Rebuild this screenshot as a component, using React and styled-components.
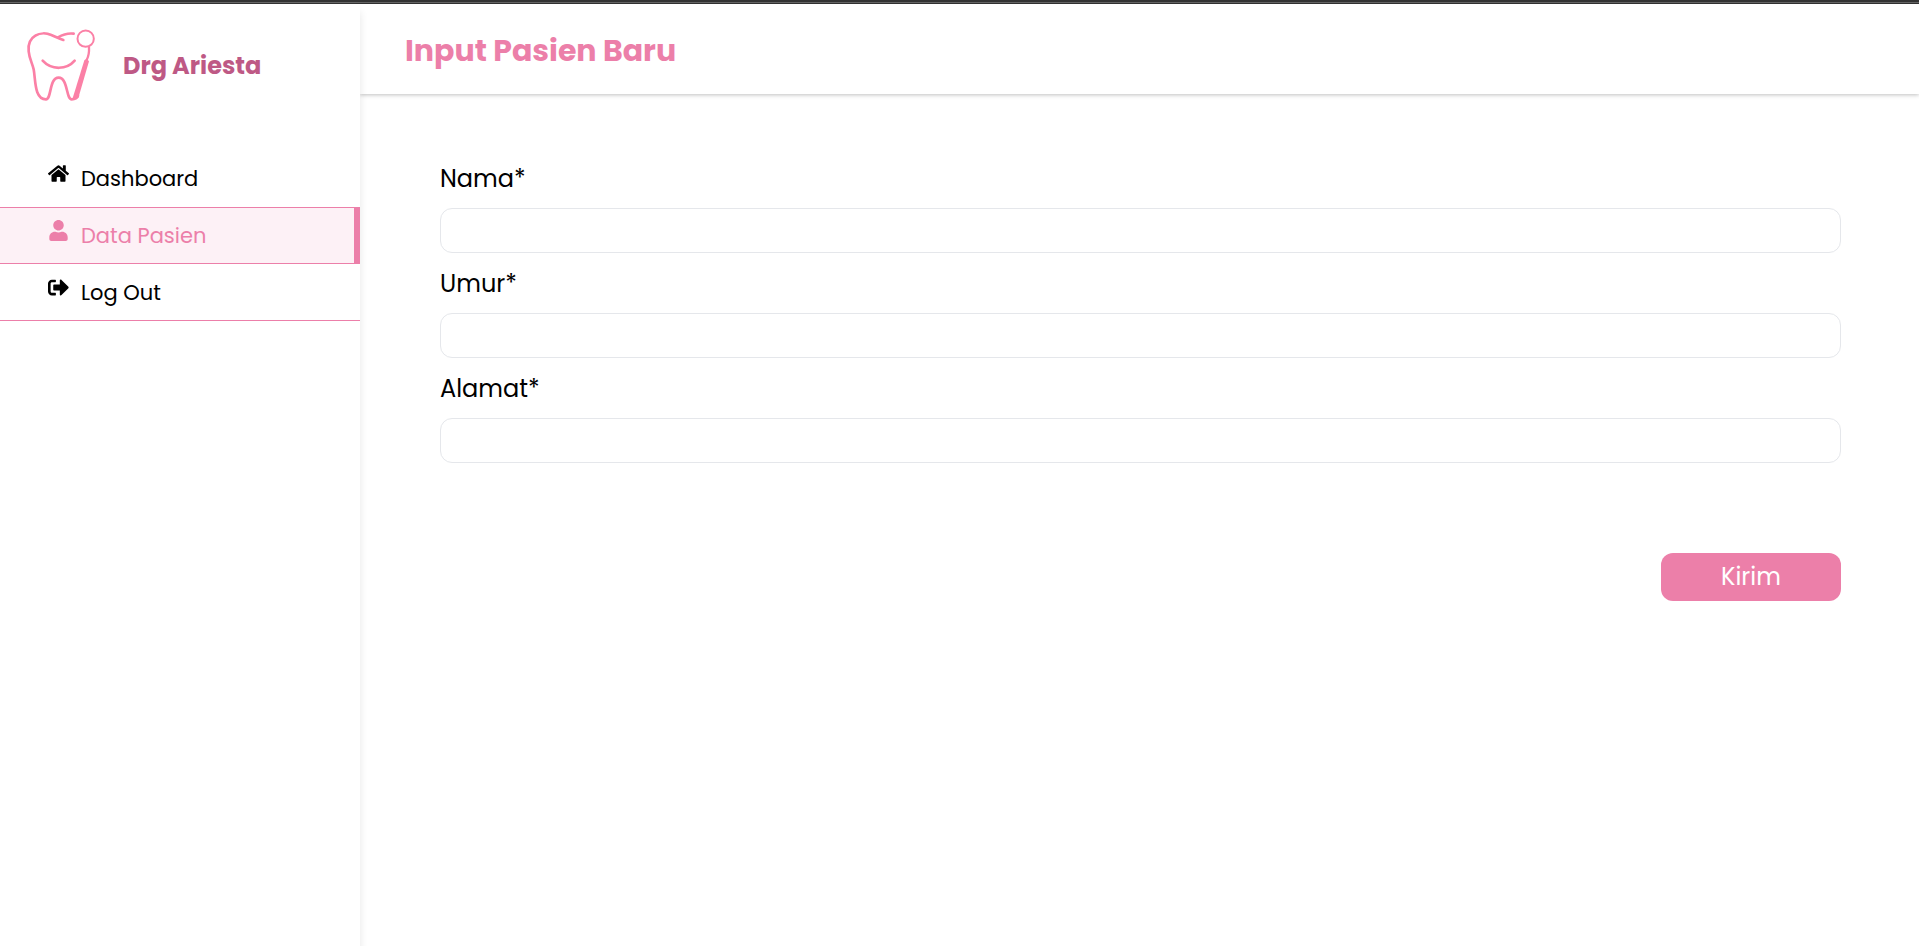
import React from "react";
import styled, { createGlobalStyle } from "styled-components";
import { FaHome, FaUser, FaSignOutAlt } from "react-icons/fa";

const pink = "#ec7fa9";
const plum = "#be5985";

const GlobalStyle = createGlobalStyle`
  *, *::before, *::after { box-sizing: border-box; }
  body {
    margin: 0;
    background: #fff;
    color: #000;
    font-family: Poppins, Inter, "Open Sans", sans-serif;
  }
`;

const Page = styled.div`
  display: flex;
  flex-direction: column;
  min-height: 100vh;
`;

const TopStrip = styled.div`
  height: 4px;
  flex: none;
  background: #333;
  border-bottom: 1px solid #333;
  box-shadow: inset 0 -1px #666;
`;

const Layout = styled.div`
  display: flex;
  flex: 1;
`;

const Sidebar = styled.aside`
  position: relative;
  z-index: 1;
  flex: none;
  width: 360px;
  background: #fff;
  box-shadow: 0 8px 8px rgba(0, 0, 0, 0.1);
`;

const Brand = styled.div`
  display: flex;
  align-items: center;
  gap: 13px;
  padding: 17px 20px 39px;
`;

const BrandName = styled.span`
  font-size: 24px;
  line-height: 36px;
  font-weight: 700;
  color: ${plum};
`;

const Menu = styled.ul`
  margin: 0;
  padding: 0;
  list-style: none;
`;

const MenuLink = styled.a`
  display: flex;
  gap: 12px;
  height: 57px;
  padding: 12px 0 0 48px;
  font-size: 21px;
  line-height: 32px;
  text-decoration: none;
  color: ${(p) => (p.$active ? pink : "#000")};
  background: ${(p) => (p.$active ? "#fdf1f6" : "transparent")};
  border-top: 1px solid ${(p) => (p.$active ? pink : "transparent")};
  border-bottom: ${(p) => (p.$active || p.$last ? `1px solid ${pink}` : "0")};
  box-shadow: ${(p) => (p.$active ? `inset -6px 0 ${pink}` : "none")};

  svg {
    flex: none;
    width: 21px;
    height: 21px;
  }
`;

const Content = styled.div`
  flex: 1;
  min-width: 0;
`;

const Header = styled.header`
  height: 90px;
  padding: 24px 45px;
  background: #fff;
  box-shadow: 0 1px 4px rgba(0, 0, 0, 0.25);
`;

const Title = styled.h1`
  margin: 0;
  font-size: 30px;
  line-height: 45px;
  font-weight: 700;
  color: ${pink};
`;

const Form = styled.form`
  display: flex;
  flex-direction: column;
  gap: 13px;
  padding: 67px 78px 66px 80px;
`;

const Field = styled.div`
  display: flex;
  flex-direction: column;
  gap: 11px;
`;

const Label = styled.label`
  font-size: 24px;
  line-height: 36px;
`;

const TextInput = styled.input`
  width: 100%;
  height: 45px;
  padding: 0 12px;
  font: inherit;
  font-size: 21px;
  background: #fff;
  border: 1px solid #e5e7eb;
  border-radius: 12px;
`;

const SubmitButton = styled.button`
  align-self: flex-end;
  width: 180px;
  height: 48px;
  margin-top: 77px;
  padding: 0;
  font: inherit;
  font-size: 24px;
  line-height: 36px;
  color: #fff;
  background: ${pink};
  border: 0;
  border-radius: 12px;
  cursor: pointer;
`;

function ToothLogo() {
  return (
    <svg width="90" height="90" viewBox="0 3 270 270" fill="none" stroke="#fb80a6" strokeWidth="8" strokeLinecap="round" strokeLinejoin="round" aria-hidden="true">
      <path d="M130 60C118 56 106 50 94 45C80 39 60 38 46 47C29 57 24 76 26 94C28 115 36 128 41 148C47 181 43 238 78 238C95 238 87 173 116 173C144 173 138 238 155 238C164 238 171 236 174 227" />
      <path d="M114 52C128 44 146 39 161 41" />
      <path d="M68 122C94 151 140 150 164 122" />
      <circle cx="197" cy="56" r="24.500" strokeWidth="6" />
      <path d="M207 82C208 98 205 110 200 120" strokeWidth="7" />
      <path d="M193 121Q200 113 207 124L175 234L157 238Z" fill="#fb80a6" stroke="none" />
    </svg>
  );
}

const menu = [
  { label: "Dashboard", Icon: FaHome },
  { label: "Data Pasien", Icon: FaUser, active: true },
  { label: "Log Out", Icon: FaSignOutAlt, last: true },
];

const fields = [
  { id: "nama", label: "Nama*" },
  { id: "umur", label: "Umur*" },
  { id: "alamat", label: "Alamat*" },
];

export default function App() {
  return (
    <>
      <GlobalStyle />
      <Page>
        <TopStrip />
        <Layout>
          <Sidebar>
            <Brand>
              <ToothLogo />
              <BrandName>Drg Ariesta</BrandName>
            </Brand>
            <nav>
              <Menu>
                {menu.map(({ label, Icon, active, last }) => (
                  <li key={label}>
                    <MenuLink href="#" $active={active} $last={last} aria-current={active ? "page" : undefined}>
                      <Icon aria-hidden="true" />
                      {label}
                    </MenuLink>
                  </li>
                ))}
              </Menu>
            </nav>
          </Sidebar>
          <Content>
            <Header>
              <Title>Input Pasien Baru</Title>
            </Header>
            <Form onSubmit={(e) => e.preventDefault()}>
              {fields.map(({ id, label }) => (
                <Field key={id}>
                  <Label htmlFor={id}>{label}</Label>
                  <TextInput id={id} name={id} type="text" required />
                </Field>
              ))}
              <SubmitButton type="submit">Kirim</SubmitButton>
            </Form>
          </Content>
        </Layout>
      </Page>
    </>
  );
}
